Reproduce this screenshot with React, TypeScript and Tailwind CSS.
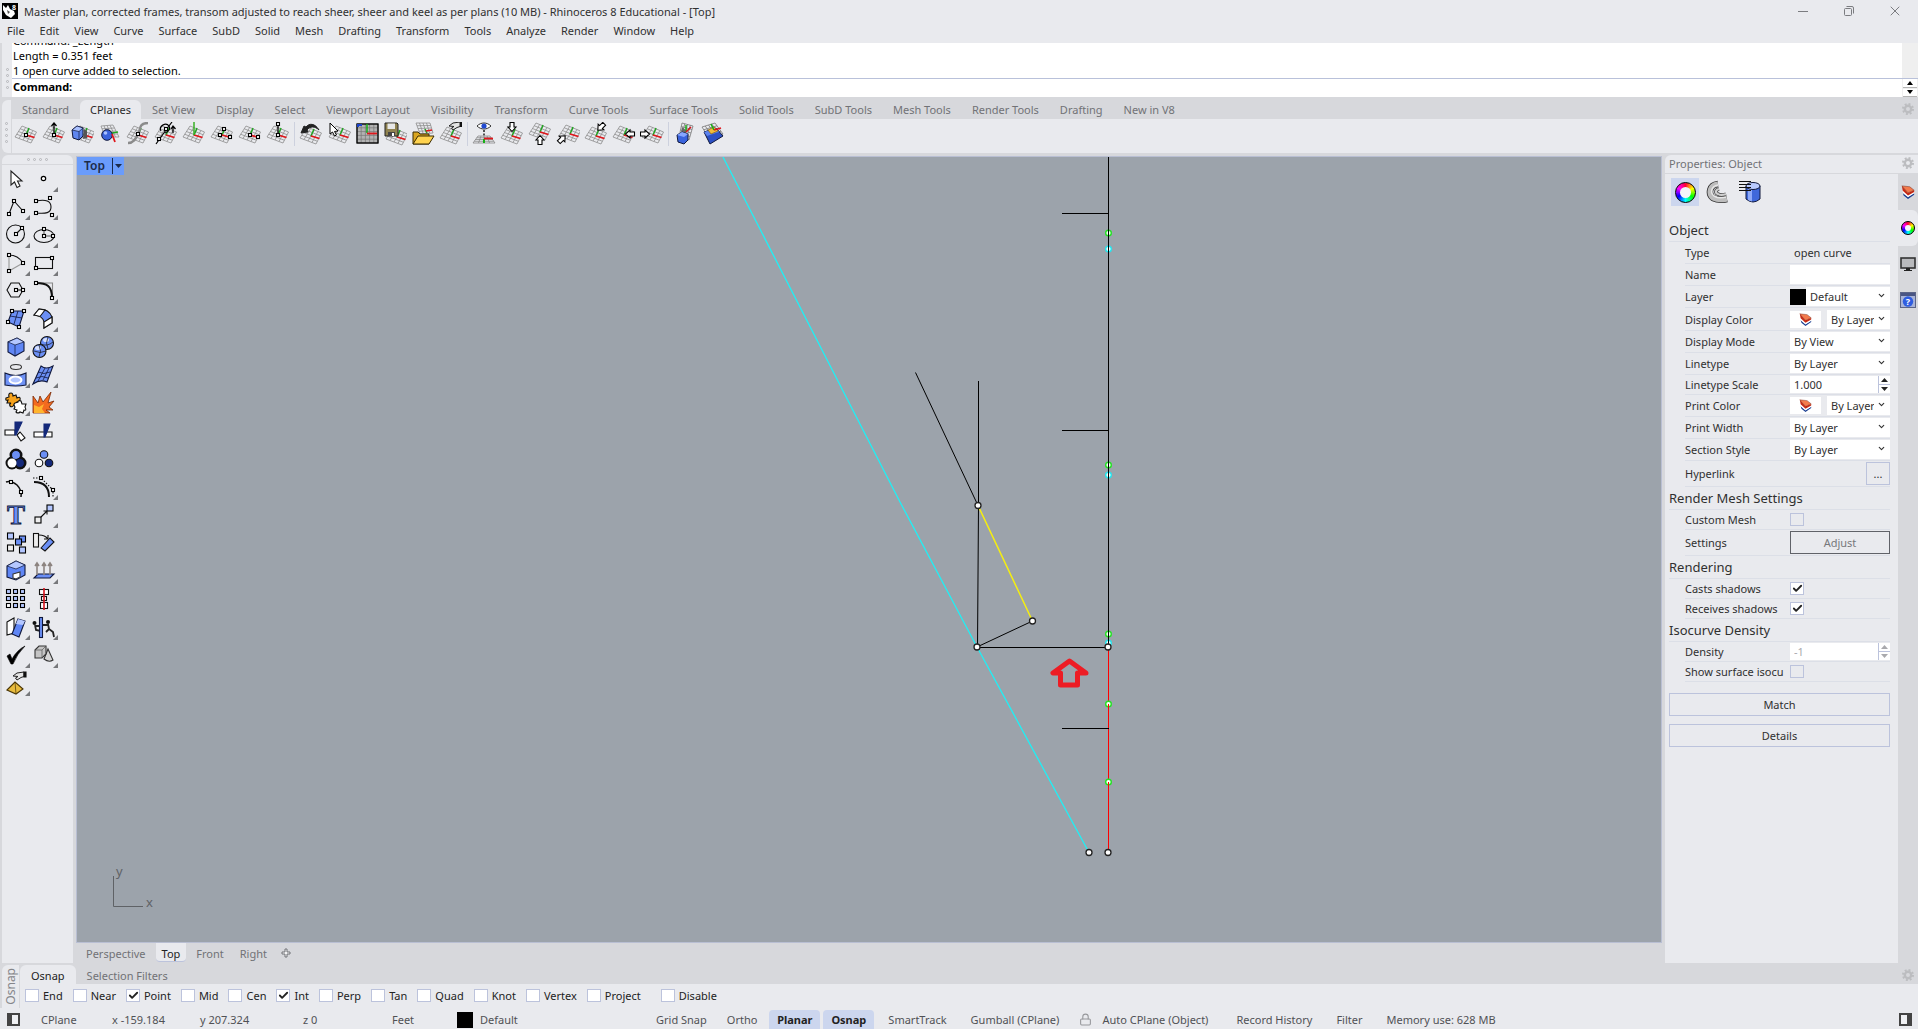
import React, { useState } from 'react';
import { Check, ChevronDown, Lock, X } from 'lucide-react';

type Pt = [number, number];

const menus = ['File', 'Edit', 'View', 'Curve', 'Surface', 'SubD', 'Solid', 'Mesh', 'Drafting', 'Transform', 'Tools', 'Analyze', 'Render', 'Window', 'Help'];

const toolTabs = ['Standard', 'CPlanes', 'Set View', 'Display', 'Select', 'Viewport Layout', 'Visibility', 'Transform', 'Curve Tools', 'Surface Tools', 'Solid Tools', 'SubD Tools', 'Mesh Tools', 'Render Tools', 'Drafting', 'New in V8'];

const snaps = ['End', 'Near', 'Point', 'Mid', 'Cen', 'Int', 'Perp', 'Tan', 'Quad', 'Knot', 'Vertex', 'Project', 'Disable'];

/* ---------- icon parts ---------- */

const gridPath = (a: Pt, b: Pt, c: Pt, d: Pt, n = 4) => {
  const mix = (p: Pt, q: Pt, t: number): Pt => [p[0] + (q[0] - p[0]) * t, p[1] + (q[1] - p[1]) * t];
  let path = '';
  for (let i = 0; i <= n; i++) {
    const t = i / n;
    path += `M${mix(a, b, t).join(' ')}L${mix(d, c, t).join(' ')}`;
    path += `M${mix(a, d, t).join(' ')}L${mix(b, c, t).join(' ')}`;
  }
  return path;
};

const Grid = ({ x = 0, y = 0 }: { x?: number; y?: number }) => (
  <g transform={`translate(${x} ${y})`} fill="none">
    <path d={gridPath([8, 4], [22.5, 10], [17, 21], [1, 15])} stroke="#8d8d8d" strokeWidth="0.8" />
    <path d="M12 13L15 6" stroke="#1fa51f" strokeWidth="1.5" />
    <path d="M12 13L20.5 15.5" stroke="#e0161b" strokeWidth="1.8" />
  </g>
);

const Sq = ({ x, y, s = 3, fill = '#fff' }: { x: number; y: number; s?: number; fill?: string }) => (
  <rect x={x - s / 2} y={y - s / 2} width={s} height={s} fill={fill} stroke="#000" strokeWidth="1.1" />
);

const Arrow = ({ x, y, r = 0 }: { x: number; y: number; r?: number }) => (
  <path transform={`translate(${x} ${y}) rotate(${r})`} d="M0 -4.5L4 0H2V4.5H-2V0H-4Z" fill="#fff" stroke="#000" strokeWidth="1.1" />
);

const Hand = ({ x = 0, y = 0 }: { x?: number; y?: number }) => (
  <g transform={`translate(${x} ${y})`}>
    <path d="M0 4L4 1L11 0V4.5L8 5.5L4 8L2.5 6L5 4.5Z" fill="#e4e4e4" stroke="#222" strokeWidth="1" />
    <path d="M11 0H13V5H11Z" fill="#111" />
  </g>
);

const planeIcons: { name: string; art: React.ReactNode }[][] = [
  [
    { name: 'Set CPlane origin', art: <><Grid /><Sq x={12} y={13} /></> },
    { name: 'Set CPlane elevation', art: <><Grid /><path d="M12 12V2M9.5 4L12 1L14.5 4" stroke="#000" strokeWidth="1.3" fill="none" /><Sq x={12} y={13} /></> },
    {
      name: 'Set CPlane to object',
      art: (
        <>
          <Grid x={2} />
          <path d="M2 8L7 4L13 6V14L9 18L3 16Z" fill="#5f86f0" stroke="#10183c" />
          <path d="M2 8L9 9.5L13 6L7 4Z" fill="#a9c0ff" stroke="#10183c" strokeWidth="0.7" />
          <path d="M9 9.5V18" fill="none" stroke="#10183c" strokeWidth="0.7" />
          <path d="M14 7L17 9V16L13 17Z" fill="#555" />
        </>
      ),
    },
    {
      name: 'Set CPlane to surface',
      art: (
        <>
          <path d={gridPath([3, 4], [15, 3], [21, 15], [7, 15])} stroke="#8d8d8d" strokeWidth="0.8" fill="none" />
          <path d="M14 11L20 10" stroke="#1fa51f" strokeWidth="1.6" />
          <circle cx="9" cy="13" r="5.3" fill="#3a63dc" stroke="#10183c" />
          <circle cx="7.5" cy="11" r="1.8" fill="#a9c0ff" />
          <path d="M14 12L17 20" stroke="#e0161b" strokeWidth="1.8" />
        </>
      ),
    },
    { name: 'Set CPlane perpendicular to curve', art: <><Grid /><path d="M22 1C12 1 15 8 12 12C10 16 8 21 2 21" fill="none" stroke="#8b8b8b" strokeWidth="2.4" /><Sq x={12} y={12} /></> },
    {
      name: 'Rotate CPlane',
      art: (
        <>
          <Grid />
          <path d="M2 22L12 8L18 0M7 9C4 4 12 0 15 4C17 7 14 10 11 11" fill="none" stroke="#000" strokeWidth="1.2" />
          <path d="M19 11V5M17 7L19 4L21.5 7" fill="none" stroke="#000" strokeWidth="1.3" />
          <Sq x={5} y={17} />
          <Sq x={12} y={7} />
        </>
      ),
    },
    { name: 'CPlane by Z axis', art: <><Grid /><path d="M12 13V0" stroke="#39b025" strokeWidth="1.5" /></> },
    { name: 'CPlane 3 points', art: <><Grid /><Sq x={10} y={13} /><Sq x={14} y={7} /><Sq x={20} y={15} /></> },
    { name: 'CPlane by X axis', art: <><Grid /><Sq x={12} y={13} /><Sq x={20} y={15} /></> },
    { name: 'CPlane vertical', art: <><Grid /><path d="M12 2V13" stroke="#000" strokeWidth="1.3" /><Sq x={12} y={2} /><Sq x={12} y={13} /></> },
  ],
  [
    { name: 'Previous CPlane', art: <><Grid y={1} /><path d="M20 8C16 1 10 1 7 5L5 4L2 11L9 10L8 8C11 4 16 4 20 8Z" fill="#222" stroke="#222" /></> },
    { name: 'CPlane from pick', art: <><Grid x={1} /><path d="M3 1V12L5.5 10L7.5 14L9.5 13L7.5 9.5L11 9Z" fill="#fff" stroke="#000" /></> },
    {
      name: 'World top',
      art: (
        <>
          <rect x="2" y="2" width="21" height="19" fill="#b2b2b2" />
          <path d={gridPath([2, 2], [23, 2], [23, 21], [2, 21], 5)} stroke="#777" strokeWidth="0.7" fill="none" />
          <rect x="2" y="2" width="21" height="19" fill="none" stroke="#000" strokeWidth="1.3" />
          <path d="M12 11V2" stroke="#18b018" strokeWidth="1.5" />
          <path d="M12 11.5H22" stroke="#e0161b" strokeWidth="1.8" />
          <path d="M2 2H7V4H4V5H2Z" fill="#1c43c8" />
        </>
      ),
    },
    {
      name: 'Save CPlane',
      art: (
        <>
          <Grid x={2} y={2} />
          <path d="M2 1H14L15 2V14H2Z" fill="#8f8250" stroke="#222" />
          <path d="M4.5 1.5H12V7H4.5Z" fill="#e7e7e7" />
          <path d="M5 10H12V14H5Z" fill="#444" />
          <path d="M9 11H11V14H9Z" fill="#fff" />
        </>
      ),
    },
    {
      name: 'Open named CPlane',
      art: (
        <>
          <path d={gridPath([5, 1], [19, 1], [22, 11], [9, 12])} stroke="#8d8d8d" strokeWidth="0.8" fill="none" />
          <path d="M14 7L16 11" stroke="#1fa51f" strokeWidth="1.5" />
          <path d="M15 9L21 8" stroke="#e0161b" strokeWidth="1.6" />
          <path d="M2 10H7L9 12H18V22H2Z" fill="#d9a520" stroke="#3a2c05" />
          <path d="M2 22L7 14H23L18 22Z" fill="#ffd34f" stroke="#3a2c05" />
        </>
      ),
    },
    { name: 'Named CPlanes', art: <><Grid y={1} /><Hand x={10} y={0} /></> },
  ],
  [
    {
      name: 'Plan view',
      art: (
        <>
          <path d="M5 4C9 0 15 0 19 4C15 8 9 8 5 4Z" fill="#fff" stroke="#333" />
          <circle cx="12" cy="4" r="2.6" fill="#1f49d0" />
          <path d="M12 8V15" stroke="#000" strokeWidth="1.3" strokeDasharray="2 1.5" />
          <path d={gridPath([6, 14], [18, 14], [23, 21], [1, 21])} stroke="#888" strokeWidth="0.8" fill="none" />
          <path d="M12 17V21" stroke="#18b018" strokeWidth="2" />
          <path d="M12 16.5H21" stroke="#e0161b" strokeWidth="1.8" />
        </>
      ),
    },
    { name: 'CPlane world top', art: <><Grid y={1} /><Arrow x={12} y={5} r={180} /></> },
    { name: 'CPlane world bottom', art: <><Grid y={-3} /><Arrow x={12} y={18} /></> },
    { name: 'CPlane world left', art: <><Grid x={2} y={-1} /><Arrow x={6} y={17} r={45} /></> },
    { name: 'CPlane world right', art: <><Grid y={1} /><Arrow x={17} y={5} r={225} /></> },
    { name: 'CPlane world front', art: <><Grid /><Arrow x={18} y={12} r={270} /></> },
    { name: 'CPlane world back', art: <><Grid x={1} /><Arrow x={5} y={12} r={90} /></> },
  ],
  [
    {
      name: 'Box CPlane',
      art: (
        <>
          <path d={gridPath([9, 1], [20, 4], [16, 18], [6, 15])} stroke="#777" strokeWidth="0.8" fill="none" />
          <path d="M9 5L14 9L12 14L8 11Z" fill="#666" />
          <path d="M13 9V3" stroke="#18b018" strokeWidth="1.5" />
          <path d="M13 10L18 5" stroke="#d3161b" strokeWidth="1.6" />
          <path d="M4 13L9 10L15 12V18L11 22L5 20Z" fill="#3a63dc" stroke="#10183c" />
          <path d="M4 13L9 10L15 12L11 15Z" fill="#86a6ff" />
        </>
      ),
    },
    {
      name: 'Auto CPlane',
      art: (
        <>
          <path d={gridPath([1, 5], [14, 1], [22, 12], [8, 16])} stroke="#777" strokeWidth="0.8" fill="none" />
          <path d="M3 10L15 6L22 14L9 22Z" fill="#2b50c4" stroke="#10183c" />
          <path d="M3 10L15 6L18 10L6 14Z" fill="#5d83ee" />
          <path d="M7 8L13 5L17 9L10 12Z" fill="#f1bd3b" stroke="#8a6410" strokeWidth="0.7" />
          <path d="M10 2L13 8" stroke="#18b018" strokeWidth="1.6" />
          <path d="M13 8L20 6" stroke="#e0161b" strokeWidth="1.8" />
        </>
      ),
    },
  ],
];

const blue = '#6b8ff5';
const pale = '#b4c7ff';

const sideIcons: { name: string; more?: boolean; art: React.ReactNode }[] = [
  { name: 'Select', art: <path d="M8 6V20L11.5 17L14 22.5L17 21L14.5 16H19Z" fill="#fff" stroke="#222" /> },
  { name: 'Point', more: true, art: <circle cx="12.5" cy="13.5" r="2.2" fill="#fff" stroke="#000" strokeWidth="1.2" /> },
  { name: 'Polyline', more: true, art: <><path d="M6 21L11 8L20 18" /><Sq x={6} y={21} /><Sq x={11} y={8} /><Sq x={20} y={18} /></> },
  { name: 'Curve', more: true, art: <><path d="M5 8C15 6 20 8 20 14C20 20 15 21 5 20" /><Sq x={5} y={8} /><Sq x={19} y={5} /><Sq x={5} y={20} /><Sq x={21} y={22} /></> },
  { name: 'Circle', more: true, art: <><circle cx="12.5" cy="13" r="9" /><path d="M13 13L19 7" /><Sq x={13} y={13} /><Sq x={19} y={7} /></> },
  { name: 'Ellipse', more: true, art: <><ellipse cx="13" cy="15" rx="10" ry="6.5" /><path d="M13 8V15H22" stroke="#555" /><Sq x={13} y={8} /><Sq x={13} y={15} /><Sq x={22} y={15} /></> },
  { name: 'Arc', more: true, art: <><path d="M6 6V22L20 14" stroke="#999" /><path d="M6 6Q15 6 20 14" /><Sq x={6} y={6} /><Sq x={6} y={22} /><Sq x={20} y={14} /></> },
  { name: 'Rectangle', more: true, art: <><rect x="4.5" y="8.5" width="17" height="11" /><Sq x={21} y={9} /><Sq x={5} y={19} /></> },
  { name: 'Polygon', more: true, art: <><path d="M4 13L8 6H16L20 13L16 20H8Z" /><path d="M13 13H20" /><Sq x={13} y={13} /><Sq x={20} y={13} /></> },
  { name: 'Fillet curves', more: true, art: <><path d="M5 6H21.5V21" stroke="#888" /><path d="M5 6C16 6 21 9 21 21" strokeWidth="2" /><Sq x={5} y={6} /><Sq x={21} y={21} /></> },
  { name: 'Surface from points', more: true, art: <><path d="M9 6H21L16 22L5 17Z" fill={blue} stroke="#10183c" /><path d="M15 6L11 19M7 11L19 13" stroke="#10183c" strokeWidth="0.8" /><Sq x={9} y={6} /><Sq x={21} y={6} /><Sq x={16} y={22} /><Sq x={5} y={17} /></> },
  {
    name: 'Extract surface', more: true,
    art: (
      <>
        <path d="M3 10L8 4Q18 4 21 12V18L13 23V17Q12 11 3 10Z" fill={blue} />
        <path d="M3 10L8 4L14 5L9 11.5Z" fill="#fff" />
        <path d="M13 17L21 12V18L13 23Z" fill="#fff" />
      </>
    ),
  },
  {
    name: 'Box', more: true,
    art: (
      <>
        <path d="M5 9L14 5L21 9V18L12 23L5 19Z" fill="#5f86f5" stroke="#10183c" />
        <path d="M5 9L14 5L21 9L12 12Z" fill={pale} stroke="#10183c" strokeWidth="0.7" />
        <path d="M12 12V23" stroke="#10183c" strokeWidth="0.7" />
      </>
    ),
  },
  {
    name: 'Boolean union', more: true,
    art: (
      <>
        <circle cx="16" cy="10" r="6.5" fill={blue} />
        <circle cx="8.5" cy="18" r="6.5" fill={blue} />
        <ellipse cx="15" cy="7" rx="3" ry="2" fill="#d5e0ff" stroke="none" />
        <ellipse cx="7" cy="15" rx="3" ry="2" fill="#d5e0ff" stroke="none" />
        <path d="M10 11Q16 14 22 9M3 18Q9 21 15 18M17 4Q14 10 17 16M8 12Q11 18 8 24" strokeWidth="0.7" />
      </>
    ),
  },
  {
    name: 'Project curves', more: true,
    art: (
      <>
        <ellipse cx="13" cy="6" rx="5.5" ry="2.5" stroke="#333" />
        <path d="M2 12Q13 17 23 12V24Q13 26 2 24Z" fill="#6f92f5" stroke="#10183c" />
        <ellipse cx="12.5" cy="19" rx="6" ry="3.5" fill={pale} stroke="#fff" strokeWidth="2" />
      </>
    ),
  },
  { name: 'Surface tools', more: true, art: <><path d="M10 5Q15 9 22 5L16 21Q9 18 2 23Z" fill={blue} stroke="#10183c" /><path d="M7 11Q13 14 19 11M5 17Q11 14 17 17M14 7L7 20M18 7L12 19" stroke="#10183c" strokeWidth="0.8" /></> },
  {
    name: 'Explode parts', more: true,
    art: (
      <>
        <path d="M3 9L6 8Q5 4 8 4Q10 4 10 7L13 6L14 9Q18 7 17 11Q17 13 14 13L14 17L11 16Q9 19 7 17Q6 15 8 14L4 14L5 11Q2 12 3 9Z" fill="#f7a31c" />
        <path d="M12 14L15 13Q15 11 18 12L19 15L23 15L22 18Q24 22 21 21L20 24L17 23Q15 25 13 23L14 21L11 20L12 18Q10 15 12 14Z" fill="#fff" />
      </>
    ),
  },
  { name: 'Explode', art: <><path d="M2 24V7L7 14L9 7L12 13L20 3L17 14L23 12L18 18L22 21L15 21L19 24Z" fill="#f36a1f" stroke="#7a2a05" strokeWidth="0.8" /><path d="M3 24V16L8 18L13 15L11 20L14 24Z" fill="#ffb52e" stroke="none" /></> },
  { name: 'Trim', art: <><path d="M2 13H12V18H2Z" fill="#fff" /><path d="M14 18L17 15L22 21L18 24Z" fill="#fff" /><path d="M12 5H19L13 18H12Z" fill="#14297a" stroke="#14297a" /></> },
  { name: 'Split', art: <><path d="M3 15H21V20H3Z" fill="#fff" /><path d="M13 7H19L14 20H13Z" fill="#14297a" stroke="#14297a" /></> },
  { name: 'Group', more: true, art: <><g strokeWidth="5"><circle cx="13" cy="10" r="4" /><circle cx="9" cy="18" r="4" /><circle cx="17" cy="18" r="4" /></g><circle cx="13" cy="10" r="4.5" fill={blue} /><circle cx="17" cy="18" r="4.5" fill="#14297a" /><circle cx="9" cy="18" r="4.5" fill="#fff" stroke="none" /></> },
  { name: 'Ungroup', art: <><circle cx="13" cy="9.5" r="3.8" fill={blue} /><circle cx="8" cy="18" r="3.8" fill="#fff" /><circle cx="18" cy="18" r="3.8" fill="#14297a" /></> },
  { name: 'Edit points', art: <><path d="M3 9Q8 7 14 12Q19 17 18 24" strokeWidth="1.5" /><Sq x={8} y={9} /><Sq x={18} y={19} /></> },
  { name: 'Control points', more: true, art: <><path d="M3 9Q18 9 18 24" strokeWidth="2" /><path d="M2 5H10L22 17V24" strokeDasharray="1.5 1.5" /><Sq x={10} y={5} /><Sq x={22} y={17} /></> },
  {
    name: 'Text',
    art: (
      <text x="13" y="23" textAnchor="middle" fontFamily="Liberation Serif, serif" fontWeight="700" fontSize="27" fill={blue} stroke="#10183c" strokeWidth="0.9">T</text>
    ),
  },
  { name: 'Move', more: true, art: <><path d="M10 16L16 10M12.5 10H16V13.5" /><Sq x={7} y={19} s={6} fill="#eee" /><Sq x={19} y={7} s={6} fill={pale} /></> },
  { name: 'Copy', art: <><Sq x={7.5} y={7} s={6} fill={pale} /><Sq x={19.5} y={10} s={6} fill={blue} /><Sq x={15.5} y={13} s={6} fill={blue} /><Sq x={7.5} y={19} s={6} fill="#eee" /><Sq x={19.5} y={21} s={6} fill={pale} /></> },
  { name: 'Rotate', art: <><rect x="2.5" y="4.5" width="5" height="13.5" fill="#eee" /><path d="M10 19L19 9L23 13L14 22Z" fill={blue} /><path d="M8 6Q14 6 17 10M17 6V10H13" /></> },
  { name: 'Cage edit', more: true, art: <><path d="M4 9L13 4L22 8V18L13 23L4 20Z" fill="#5f86f5" stroke="#10183c" /><path d="M4 9L13 4L22 8L13 12Z" fill={pale} stroke="#10183c" strokeWidth="0.7" /><path d="M10 17L17 15V20L13 22L10 21Z" fill="#fff" stroke="#333" /></> },
  { name: 'Extrude', more: true, art: <><path d="M3 21L7 17H23L19 21Z" fill={blue} stroke="#10183c" /><path d="M6 18V7M13 18V7M19 18V7M4 9L6 6L8 9M11 9L13 6L15 9M17 9L19 6L21 9" stroke="#8c8480" strokeWidth="1.6" /></> },
  {
    name: 'Array', more: true,
    art: (
      <>
        {[6.5, 13.5, 20.5].map(y => [5.5, 12.5, 19.5].map(x => (
          <Sq key={`${x}-${y}`} x={x} y={y} s={4} fill={y === 20.5 && x === 5.5 ? '#fff' : pale} />
        )))}
      </>
    ),
  },
  { name: 'Align', more: true, art: <><rect x="8.5" y="4.5" width="9" height="5" fill="#fff" /><rect x="10.5" y="11.5" width="5" height="4" fill="#fff" /><rect x="9.5" y="17.5" width="7" height="6" fill="#fff" /><path d="M13 3V25" stroke="#d8141c" strokeWidth="1.6" /></> },
  { name: 'Shear', more: true, art: <><path d="M4 9L11 5V20L4 22Z" fill="#fff" /><path d="M15 6L22 8L16 24L9 21Z" fill="#5f86f5" stroke="#10183c" /><path d="M15 6L22 8L20 12L13 11Z" fill={pale} stroke="none" /></> },
  {
    name: 'Pull', more: true,
    art: (
      <>
        <circle cx="3.5" cy="10" r="2" fill="#111" stroke="none" />
        <circle cx="17" cy="9" r="2" fill="#111" stroke="none" />
        <path d="M4 12L5 17L10 18L9 24M4 13H9M17 11L18 16L22 19L23 24M17 12H12M18 16L15 19" stroke="#222" strokeWidth="1.8" />
        <rect x="8.5" y="4.5" width="3" height="20" fill={blue} stroke="#10183c" />
      </>
    ),
  },
  { name: 'Check', more: true, art: <path d="M4 15L7 13L9 18Q14 9 22 5Q14 13 10 23H8Z" fill="#000" stroke="#000" strokeWidth="0.6" /> },
  { name: 'Shade', more: true, art: <><path d="M17 8L22 19Q18 22 13 18Z" fill="#d6d6d6" stroke="#333" /><path d="M4 9L8 5H15V13L11 17H4Z" fill="#c4c4c4" stroke="#333" /><path d="M4 9H11L15 5M11 9V17" stroke="#555" strokeWidth="0.7" /></> },
  { name: 'Options', more: true, art: <><Hand x={10} y={3} /><path d="M4 21L12 13L20 20L13 25Z" fill="#e8bb3d" stroke="#4a3606" /><path d="M12 13L13 25" stroke="#4a3606" strokeWidth="0.7" /></> },
];

const LayerMark = ({ size = 18 }: { size?: number }) => (
  <svg width={size} height={size} viewBox="0 0 16 16">
    <path d="M2 8.5L8 13.5L15 9.5V11L8 16L3 12Z" fill="#1b3f91" />
    <path d="M2 6L8 12L15 8V9.5L8 14L2 9Z" fill="#fff" />
    <path d="M1 1L8 9L15 6V8L8 12L2 6.5Z" fill="#c92a14" />
    <path d="M1 1L10 2L15 6L8 9Z" fill="#f47b4c" stroke="#6d1a0c" strokeWidth="0.5" />
  </svg>
);

const ColorRing = ({ small }: { small?: boolean }) => (
  <span className={`flex items-center justify-center rounded-full border border-black bg-[conic-gradient(#f03,#ff0,#0f0,#0ff,#00f,#f0f,#f03)] ${small ? 'w-[14px] h-[14px]' : 'w-[21px] h-[21px]'}`}>
    <span className={`rounded-full bg-[#f4f5fa] ${small ? 'w-[6px] h-[6px]' : 'w-[11px] h-[11px]'}`} />
  </span>
);

/* ---------- small controls ---------- */

const Gear = () => (
  <svg width="12" height="12" viewBox="0 0 12 12" fill="none" stroke="#bcbdc0">
    <circle cx="6" cy="6" r="3.2" strokeWidth="2.4" />
    <circle cx="6" cy="6" r="5" strokeWidth="2" strokeDasharray="1.96 1.96" />
  </svg>
);

const Dots = ({ vertical }: { vertical?: boolean }) => (
  <span className={`flex gap-[3px] ${vertical ? 'flex-col' : ''}`}>
    {[0, 1, 2, 3].map(i => (
      <span key={i} className="w-[3px] h-[3px] rounded-full border border-[#b4b5ba]" />
    ))}
  </span>
);

const Tick = ({ id, on, onToggle, disabled }: { id: string; on: boolean; onToggle?: () => void; disabled?: boolean }) => (
  <span className="relative flex shrink-0">
    <input
      id={id}
      type="checkbox"
      checked={on}
      disabled={disabled}
      onChange={() => onToggle?.()}
      className="appearance-none w-[14px] h-[13px] bg-white border border-[#bcc3dc] disabled:bg-[#e9eaee]"
    />
    {on && <Check size={11} strokeWidth={4} className="absolute left-[2px] top-px text-[#222] pointer-events-none" />}
  </span>
);

const Picker = ({ id, value }: { id: string; value: string }) => (
  <span className="relative flex flex-1 min-w-0 h-[19px] bg-white">
    <select id={id} className="appearance-none w-full h-full pl-1 pr-4 bg-white overflow-hidden" defaultValue={value}>
      <option>{value}</option>
    </select>
    <ChevronDown size={9} strokeWidth={3} className="absolute right-1 top-1 text-[#333] pointer-events-none" />
  </span>
);

const Spinner = ({ id, value, disabled }: { id: string; value: string; disabled?: boolean }) => (
  <span className="flex flex-1 min-w-0 h-[17px] bg-white">
    <input id={id} defaultValue={value} disabled={disabled} className="flex-1 min-w-0 pl-1 bg-white disabled:text-[#a9a9ad]" />
    <span className={`flex flex-col w-3 border-l border-[#bcc3dc] ${disabled ? 'text-[#a9a9ad]' : 'text-[#222]'}`}>
      <button aria-label="Increase" className="flex-1 flex items-center justify-center border-b border-[#bcc3dc]">
        <svg width="7" height="4" viewBox="0 0 7 4"><path d="M3.5 0L7 4H0Z" fill="currentColor" /></svg>
      </button>
      <button aria-label="Decrease" className="flex-1 flex items-center justify-center">
        <svg width="7" height="4" viewBox="0 0 7 4"><path d="M3.5 4L7 0H0Z" fill="currentColor" /></svg>
      </button>
    </span>
  </span>
);

const Row = ({ label, id, height = 'h-[22px]', children }: { label: string; id?: string; height?: string; children: React.ReactNode }) => (
  <div className={`flex items-center ml-4 border-b border-[#dcdfe7] ${height}`}>
    <label htmlFor={id} className="w-[101px] shrink-0 whitespace-nowrap">{label}</label>
    <div className="flex flex-1 items-center min-w-0 pl-1">{children}</div>
  </div>
);

const Heading = ({ children }: { children: React.ReactNode }) => (
  <h3 className="flex items-center h-[23px] text-[13px] border-b border-[#dcdfe7]">{children}</h3>
);

const SwatchPicker = ({ id }: { id: string }) => (
  <>
    <button aria-label="Pick color" className="flex items-center justify-center w-[31px] h-[17px] mr-[6px] bg-white shrink-0">
      <LayerMark size={13} />
    </button>
    <Picker id={id} value="By Layer" />
  </>
);

/* ---------- panels ---------- */

function CommandArea() {
  return (
    <div className="flex h-[54px] shrink-0">
      <div className="flex items-center justify-center w-3 pt-4 border-l-2 border-[#d7d8dc]"><Dots vertical /></div>
      <div className="flex-1 flex flex-col bg-white text-black">
        <div className="flex flex-col justify-end h-[35px] overflow-hidden leading-[15px] pl-px">
          <p>Command: _Length</p>
          <p>Length = 0.351 feet</p>
          <p>1 open curve added to selection.</p>
        </div>
        <div className="flex items-center h-[19px] pl-px pb-[3px] border-t border-[#b9c1da]">
          <label htmlFor="command" className="font-bold">Command:</label>
          <input id="command" className="flex-1 ml-1 outline-none" />
        </div>
      </div>
      <div className="flex flex-col w-4 bg-[#efefef]">
        <div className="h-[35px]" />
        <div className="flex-1 flex flex-col gap-px px-px border-t border-[#b9c1da]">
          <button aria-label="Previous command" className="flex-1 flex items-center justify-center bg-white border-b border-[#b5b5b5]">
            <svg width="6" height="4" viewBox="0 0 6 4"><path d="M3 0L6 4H0Z" /></svg>
          </button>
          <button aria-label="Next command" className="flex-1 flex items-center justify-center bg-white border-b border-[#b5b5b5]">
            <svg width="6" height="4" viewBox="0 0 6 4"><path d="M3 4L6 0H0Z" /></svg>
          </button>
        </div>
      </div>
    </div>
  );
}

function ToolArea() {
  const [tab, setTab] = useState('CPlanes');
  return (
    <div className="flex h-[56px] shrink-0 bg-[#d7d8dc]">
      <div className="flex items-center justify-center w-[9px] ml-[2px] mr-px mt-[3px] pt-3 rounded-l-md bg-[#e9eaee]"><Dots vertical /></div>
      <div className="flex-1 flex flex-col">
        <div className="flex items-end gap-px h-[22px]">
          {toolTabs.map(t => (
            <button
              key={t}
              onClick={() => setTab(t)}
              className={`h-[19px] px-[10px] rounded-t-md whitespace-nowrap ${t === tab ? 'bg-[#e9eaee] text-[#2b2b2b]' : 'text-[#717276]'}`}
            >
              {t}
            </button>
          ))}
          <button aria-label="Toolbar options" className="ml-auto mr-1 mb-1"><Gear /></button>
        </div>
        <div className="flex-1 flex items-start bg-[#e9eaee] pt-[3px]">
          {planeIcons.map((group, g) => (
            <div key={g} className={`flex ${g > 0 ? 'ml-[2px] pl-[2px] border-l border-[#cdd1de]' : ''}`}>
              {group.map(icon => (
                <button key={icon.name} aria-label={icon.name} className="flex justify-center w-7 h-6">
                  <svg width="24" height="24" viewBox="0 0 24 24">{icon.art}</svg>
                </button>
              ))}
            </div>
          ))}
        </div>
      </div>
    </div>
  );
}

function SideTools() {
  return (
    <div className="w-[71px] shrink-0 ml-[2px] mt-[2px] rounded-t-md bg-[#e9eaee]">
      <div className="flex items-center justify-center h-[10px] border-b border-[#d7d8dc]"><Dots /></div>
      <div className="grid grid-cols-[28px_28px] pl-px">
        {sideIcons.map(icon => (
          <button key={icon.name} aria-label={icon.name} className="w-7 h-7">
            <svg width="28" height="28" viewBox="0 0 28 28" fill="none" stroke="#111" strokeWidth="1.1">
              {icon.art}
              {icon.more && <path d="M27 22V27H22Z" fill="#77787b" stroke="none" />}
            </svg>
          </button>
        ))}
      </div>
    </div>
  );
}

const marks: { y: number; color: string }[] = [
  { y: 76, color: '#22e222' },
  { y: 92, color: '#22e5ee' },
  { y: 308, color: '#22e222' },
  { y: 318, color: '#22e5ee' },
  { y: 477, color: '#22e222' },
  { y: 486, color: '#22e5ee' },
  { y: 547, color: '#22e222' },
  { y: 625, color: '#22e222' },
];

const ends: Pt[] = [[901, 348.5], [955.5, 464], [900, 490], [1031, 490], [1012, 695.5], [1031, 695.5]];

function Viewport() {
  const [view, setView] = useState('Top');
  return (
    <div className="flex-1 flex flex-col min-w-0 mt-[3px] mx-[3px]">
      <div className="relative flex-1 overflow-hidden bg-[#9ca3ab] border border-[#b9bfd3]">
        <svg className="absolute inset-0 w-full h-full" fill="none">
          <path d="M1031.5 490V695" stroke="#f00" />
          {marks.map(m => (
            <circle key={m.y} cx="1031.5" cy={m.y} r="2.8" fill="#fff" stroke={m.color} strokeWidth="1.4" />
          ))}
          <g stroke="#000">
            <path d="M1031.5 0V490M985 56.5H1032M985 273.5H1032M985 571.5H1032M900 490.5H1031" />
            <path d="M901.5 224V349L900.5 490M838.5 215.5L901 348.5M955.5 464L900 490" />
          </g>
          <path d="M1031.5 547V560M1031.5 625V640" stroke="#f00" />
          <path d="M646 0L823 345L900 490L1012 695.5" stroke="#1ff0f5" strokeWidth="1.3" />
          <path d="M901 348.5L955.5 464" stroke="#f5ee10" strokeWidth="1.5" />
          {ends.map(([x, y]) => (
            <circle key={`${x}-${y}`} cx={x} cy={y} r="3" fill="#fff" stroke="#222" strokeWidth="1.3" />
          ))}
          <path d="M992.5 504L976 516H983.5V528H1000.5V516H1009Z" stroke="#ed1c24" strokeWidth="5" strokeLinejoin="round" />
          <path d="M36.5 719V749.5H66" stroke="#5f6266" />
          <g fill="#5f6266" fontSize="13">
            <text x="39" y="719">y</text>
            <text x="69" y="750">x</text>
          </g>
        </svg>
        <button className="relative flex items-center h-[18px] w-[47px] pl-[7px] bg-[#6a9cfb] text-xs font-semibold text-[#1c2b4a]">
          Top
          <span className="h-4 ml-auto border-l border-[#1c2b4a]" />
          <svg className="mx-[2px]" width="7" height="4" viewBox="0 0 7 4"><path d="M0 0H7L3.5 4Z" fill="currentColor" /></svg>
        </button>
      </div>
      <div className="flex gap-1 h-[20px] pl-1 text-[#717276]">
        {['Perspective', 'Top', 'Front', 'Right'].map(v => (
          <button
            key={v}
            onClick={() => setView(v)}
            className={`h-[19px] px-[6px] pt-[2px] rounded-b ${v === view ? 'bg-[#e9eaee] text-[#222] border-b border-[#bcc3dc]' : ''}`}
          >
            {v}
          </button>
        ))}
        <button aria-label="New viewport" className="px-1">
          <svg width="10" height="10" viewBox="0 0 10 10" fill="#f4f4f6" stroke="#717276"><path d="M4 1H6V4H9V6H6V9H4V6H1V4H4Z" /></svg>
        </button>
      </div>
    </div>
  );
}

function Properties() {
  const [shadows, setShadows] = useState({ casts: true, receives: true });
  return (
    <div className="flex flex-col w-[253px] shrink-0 mt-[2px] bg-[#e9eaee] rounded-tl-md overflow-hidden">
      <div className="flex items-center justify-between h-[19px] px-1 pb-[2px] text-[#717276] border-b border-[#d7d8dc]">
        Properties: Object
        <Gear />
      </div>
      <div className="flex-1 flex">
        <div className="flex-1 min-w-0 pl-1 pr-2 pt-1 text-[#303030]">
          <div className="flex items-center h-7 mb-[13px]">
            <button aria-label="Object" className="flex items-center justify-center w-7 h-7 ml-[2px] bg-[#ccd6ee]"><ColorRing /></button>
            <button aria-label="Material" className="flex items-center justify-center w-8 h-7 ml-[3px]">
              <svg width="24" height="24" viewBox="0 0 24 24" fill="none">
                <path d="M12 4C3 5 2 14 7 18Q13 21 21 19" stroke="#333" strokeWidth="6.5" />
                <path d="M12 4C3 5 2 14 7 18Q13 21 21 19" stroke="#bdbdbd" strokeWidth="5" />
                <path d="M12 5C5 6 4 13 8 16Q13 19 20 17" stroke="#e6e6e6" strokeWidth="1.5" />
                <path d="M13 9C9 10 9 13 12 14Q15 16 20 14" stroke="#444" strokeWidth="3.5" />
                <path d="M13 9C9 10 9 13 12 14Q15 16 20 14" stroke="#cfcfcf" strokeWidth="2" />
              </svg>
            </button>
            <button aria-label="Texture mapping" className="flex items-center justify-center w-8 h-7">
              <svg width="24" height="24" viewBox="0 0 24 24">
                <path d="M8 6V19Q15 25 22 19V6Z" fill="#3f68da" stroke="#10183c" />
                <path d="M10 8V20Q12 21 14 21.5V9Z" fill="#8faaf8" />
                <ellipse cx="15" cy="6" rx="7" ry="3.5" fill="#b9caff" stroke="#10183c" />
                <path d="M1 1.5H13M1 4.5H13M1 7.5H13M1 10.5H13" stroke="#111" />
              </svg>
            </button>
          </div>
          <Heading>Object</Heading>
          <Row label="Type"><span className="pl-1">open curve</span></Row>
          <Row label="Name" id="name"><input id="name" className="flex-1 min-w-0 h-[19px] px-1 bg-white" /></Row>
          <Row label="Layer" id="layer"><span className="w-4 h-4 bg-black shrink-0" /><Picker id="layer" value="Default" /></Row>
          <Row label="Display Color" id="display-color" height="h-[23px]"><SwatchPicker id="display-color" /></Row>
          <Row label="Display Mode" id="display-mode"><Picker id="display-mode" value="By View" /></Row>
          <Row label="Linetype" id="linetype"><Picker id="linetype" value="By Layer" /></Row>
          <Row label="Linetype Scale" id="scale" height="h-[20px]"><Spinner id="scale" value="1.000" /></Row>
          <Row label="Print Color" id="print-color"><SwatchPicker id="print-color" /></Row>
          <Row label="Print Width" id="print-width"><Picker id="print-width" value="By Layer" /></Row>
          <Row label="Section Style" id="section"><Picker id="section" value="By Layer" /></Row>
          <Row label="Hyperlink" id="hyperlink" height="h-[26px]"><button id="hyperlink" className="ml-auto w-6 h-[23px] border border-[#bcc3dc]">...</button></Row>
          <Heading>Render Mesh Settings</Heading>
          <Row label="Custom Mesh" id="custom-mesh" height="h-5"><Tick id="custom-mesh" on={false} disabled /></Row>
          <Row label="Settings" id="adjust" height="h-[26px]"><button id="adjust" className="flex-1 h-[23px] border border-[#606268] text-[#77787b]">Adjust</button></Row>
          <Heading>Rendering</Heading>
          <Row label="Casts shadows" id="casts" height="h-5"><Tick id="casts" on={shadows.casts} onToggle={() => setShadows({ ...shadows, casts: !shadows.casts })} /></Row>
          <Row label="Receives shadows" id="receives" height="h-5"><Tick id="receives" on={shadows.receives} onToggle={() => setShadows({ ...shadows, receives: !shadows.receives })} /></Row>
          <Heading>Isocurve Density</Heading>
          <Row label="Density" id="density" height="h-5"><Spinner id="density" value="-1" disabled /></Row>
          <Row label="Show surface isocu" id="isocurves" height="h-5"><Tick id="isocurves" on={false} disabled /></Row>
          <button className="block w-full h-[23px] mt-[11px] border border-[#bcc3dc]">Match</button>
          <button className="block w-full h-[23px] mt-2 border border-[#bcc3dc]">Details</button>
        </div>
        <div className="flex flex-col w-5 shrink-0 bg-[#d7d8dc]">
          <button aria-label="Layers" className="flex items-center justify-center h-9"><LayerMark size={14} /></button>
          <button aria-label="Properties" className="flex items-center justify-center h-9 rounded-r-md bg-[#e9eaee]"><ColorRing small /></button>
          <button aria-label="Display" className="flex items-center justify-center h-9">
            <svg width="16" height="16" viewBox="0 0 16 16"><rect x="1" y="2" width="14" height="10" fill="#b9babd" stroke="#333" strokeWidth="1.6" /><path d="M6 12H10V14H12V15H4V14H6Z" fill="#222" /></svg>
          </button>
          <button aria-label="Help" className="flex items-center justify-center h-9">
            <svg width="16" height="16" viewBox="0 0 16 16">
              <rect x="0.5" y="0.5" width="15" height="15" fill="#a9b4d8" stroke="#5c6588" />
              <path d="M1 1H15V4H1Z" fill="#4a5684" />
              <circle cx="8" cy="9.5" r="5.2" fill="#2f5de0" />
              <text x="8" y="13" textAnchor="middle" fontSize="9" fontWeight="700" fill="#fff">?</text>
            </svg>
          </button>
        </div>
      </div>
    </div>
  );
}

function OsnapBar() {
  const [active, setActive] = useState<string[]>(['Point', 'Int']);
  const toggle = (name: string) =>
    setActive(active.includes(name) ? active.filter(n => n !== name) : [...active, name]);

  return (
    <div className="flex h-[45px] shrink-0 pt-[2px] pl-[2px] bg-[#d7d8dc]">
      <div className="flex items-center justify-center w-[18px] rounded-tl-md bg-[#e9eaee] border-r border-[#d7d8dc] text-xs text-[#85868a]">
        <span className="[writing-mode:vertical-rl] rotate-180">Osnap</span>
      </div>
      <div className="flex-1 flex flex-col">
        <div className="flex items-center h-[19px] text-[#717276]">
          <button className="h-full px-[11px] pt-[2px] rounded-t-md bg-[#e9eaee] text-[#222]">Osnap</button>
          <button className="h-full px-[11px] pt-[2px]">Selection Filters</button>
          <button aria-label="Osnap options" className="ml-auto mr-1"><Gear /></button>
        </div>
        <div className="flex-1 flex items-center gap-[10px] pl-[5px] pb-px bg-[#e9eaee] text-[#222]">
          {snaps.map(s => (
            <label key={s} htmlFor={`snap-${s}`} className={`flex items-center gap-1 ${s === 'Disable' ? 'ml-[10px]' : ''}`}>
              <Tick id={`snap-${s}`} on={active.includes(s)} onToggle={() => toggle(s)} />
              {s}
            </label>
          ))}
        </div>
      </div>
    </div>
  );
}

const PanelIcon = ({ flip }: { flip?: boolean }) => (
  <svg width="13" height="13" viewBox="0 0 13 13" className={flip ? '-scale-x-100' : ''}>
    <rect x="1" y="1" width="11" height="11" fill="#f0f1f4" stroke="#444" strokeWidth="2" />
    <rect x="1" y="1" width="4" height="11" fill="#444" />
  </svg>
);

function StatusBar() {
  return (
    <div className="flex items-center h-[21px] shrink-0 pt-[2px] pl-[7px] pr-[6px] text-[#505155] whitespace-nowrap">
      <button aria-label="Toggle left panel"><PanelIcon /></button>
      <button className="ml-[21px] w-[71px] text-left">CPlane</button>
      <span className="w-[88px]">x -159.184</span>
      <span className="w-[103px]">y 207.324</span>
      <span className="w-[89px]">z 0</span>
      <button className="w-[65px] text-left">Feet</button>
      <button className="flex items-center gap-[7px] w-[191px]"><span className="w-4 h-4 bg-black" />Default</button>
      <button className="px-2">Grid Snap</button>
      <button className="px-3">Ortho</button>
      <button className="h-[19px] w-[51px] mr-[3px] rounded-t bg-[#ccd6ee] font-bold text-[#222]">Planar</button>
      <button className="h-[19px] w-[51px] rounded-t bg-[#ccd6ee] font-bold text-[#222]">Osnap</button>
      <button className="ml-[14px]">SmartTrack</button>
      <button className="ml-6">Gumball (CPlane)</button>
      <button className="flex items-center gap-[10px] ml-5"><Lock size={13} className="text-[#97989c]" />Auto CPlane (Object)</button>
      <button className="ml-7">Record History</button>
      <button className="ml-6">Filter</button>
      <span className="ml-6">Memory use: 628 MB</span>
      <button aria-label="Toggle right panel" className="ml-auto"><PanelIcon flip /></button>
    </div>
  );
}

export default function App() {
  return (
    <div className="flex flex-col h-screen overflow-hidden bg-[#e9eaee] font-['Noto_Sans',sans-serif] text-[11px] leading-[15px] text-[#303030]">
      <header className="flex items-center h-[22px] shrink-0 pl-[2px]">
        <svg width="16" height="16" viewBox="0 0 16 16">
          <rect width="16" height="16" fill="#000" />
          <path d="M1 2L4 5L6 2L8 6L12 8L13 11L9 15L4 12L1 7Z" fill="#fff" />
          <path d="M5 7L8 9L6 11Z" fill="#555" />
          <text x="10" y="7" fontSize="7" fontWeight="700" fill="#fff">8</text>
        </svg>
        <h1 className="ml-[6px] whitespace-nowrap">Master plan, corrected frames, transom adjusted to reach sheer, sheer and keel as per plans (10 MB) - Rhinoceros 8 Educational - [Top]</h1>
        <div className="flex ml-auto text-[#7b7c80]">
          <button aria-label="Minimize" className="flex items-center justify-center w-[46px] h-5"><span className="w-[10px] border-t border-current" /></button>
          <button aria-label="Restore" className="flex items-center justify-center w-[46px] h-5">
            <svg width="10" height="10" viewBox="0 0 10 10" fill="none" stroke="currentColor"><rect x="0.5" y="2.5" width="7" height="7" rx="1" /><path d="M2.5 0.5H8Q9.5 0.5 9.5 2V7.5" /></svg>
          </button>
          <button aria-label="Close" className="flex items-center justify-center w-[46px] h-5"><X size={16} strokeWidth={1.5} /></button>
        </div>
      </header>
      <nav className="flex items-start h-[21px] shrink-0 gap-[15px] pt-px pl-[7px]">
        {menus.map(m => <button key={m}>{m}</button>)}
      </nav>
      <CommandArea />
      <ToolArea />
      <main className="flex-1 flex min-h-0 bg-[#d7d8dc]">
        <SideTools />
        <Viewport />
        <Properties />
      </main>
      <OsnapBar />
      <StatusBar />
    </div>
  );
}
